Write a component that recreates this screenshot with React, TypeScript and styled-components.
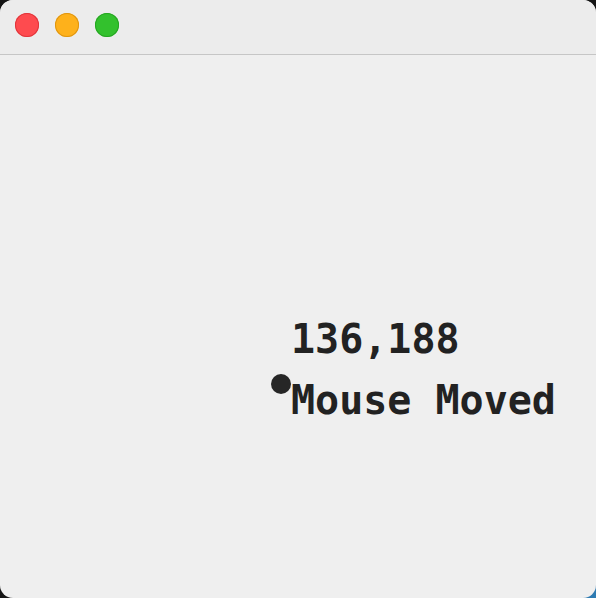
import styled, { createGlobalStyle } from "styled-components";

const GlobalStyle = createGlobalStyle`
  html, body {
    margin: 0;
    padding: 0;
    width: 596px;
    height: 598px;
    overflow: hidden;
    background: linear-gradient(135deg, #151515 0%, #151515 78%, #2f7db5 100%);
  }
`;

const Window = styled.div`
  width: 596px;
  height: 598px;
  border-radius: 13px;
  overflow: hidden;
  background: #efefef;
  display: flex;
  flex-direction: column;
`;

const TitleBar = styled.div`
  height: 55px;
  flex: none;
  background: #ececec;
  border-bottom: 1px solid #c6c6c6;
  display: flex;
  align-items: center;
  gap: 16px;
  padding: 0 0 4px 15px;
  box-sizing: border-box;
`;

const Light = styled.span<{ $fill: string; $edge: string }>`
  width: 24px;
  height: 24px;
  border-radius: 50%;
  background: ${(p) => p.$fill};
  box-shadow: inset 0 0 0 1px ${(p) => p.$edge};
`;

const Canvas = styled.div`
  position: relative;
  flex: 1;
`;

const Label = styled.div<{ $x: number; $y: number }>`
  position: absolute;
  left: ${(p) => p.$x}px;
  top: ${(p) => p.$y}px;
  font-family: "DejaVu Sans Mono", "Liberation Mono", monospace;
  font-weight: 700;
  font-size: 40px;
  line-height: 40px;
  color: #222222;
  white-space: pre;
`;

const Marker = styled.div<{ $x: number; $y: number }>`
  position: absolute;
  left: ${(p) => p.$x - 10}px;
  top: ${(p) => p.$y - 10}px;
  width: 20px;
  height: 20px;
  border-radius: 50%;
  background: #262626;
`;

export default function App() {
  const mouse = { x: 281, y: 329 };
  return (
    <>
      <GlobalStyle />
      <Window>
        <TitleBar>
          <Light $fill="#fe4b4f" $edge="#e0363b" />
          <Light $fill="#feb11b" $edge="#df9510" />
          <Light $fill="#33c12d" $edge="#26a522" />
        </TitleBar>
        <Canvas>
          <Label $x={291} $y={264}>136,188</Label>
          <Marker $x={mouse.x} $y={mouse.y} />
          <Label $x={291} $y={325}>Mouse Moved</Label>
        </Canvas>
      </Window>
    </>
  );
}
